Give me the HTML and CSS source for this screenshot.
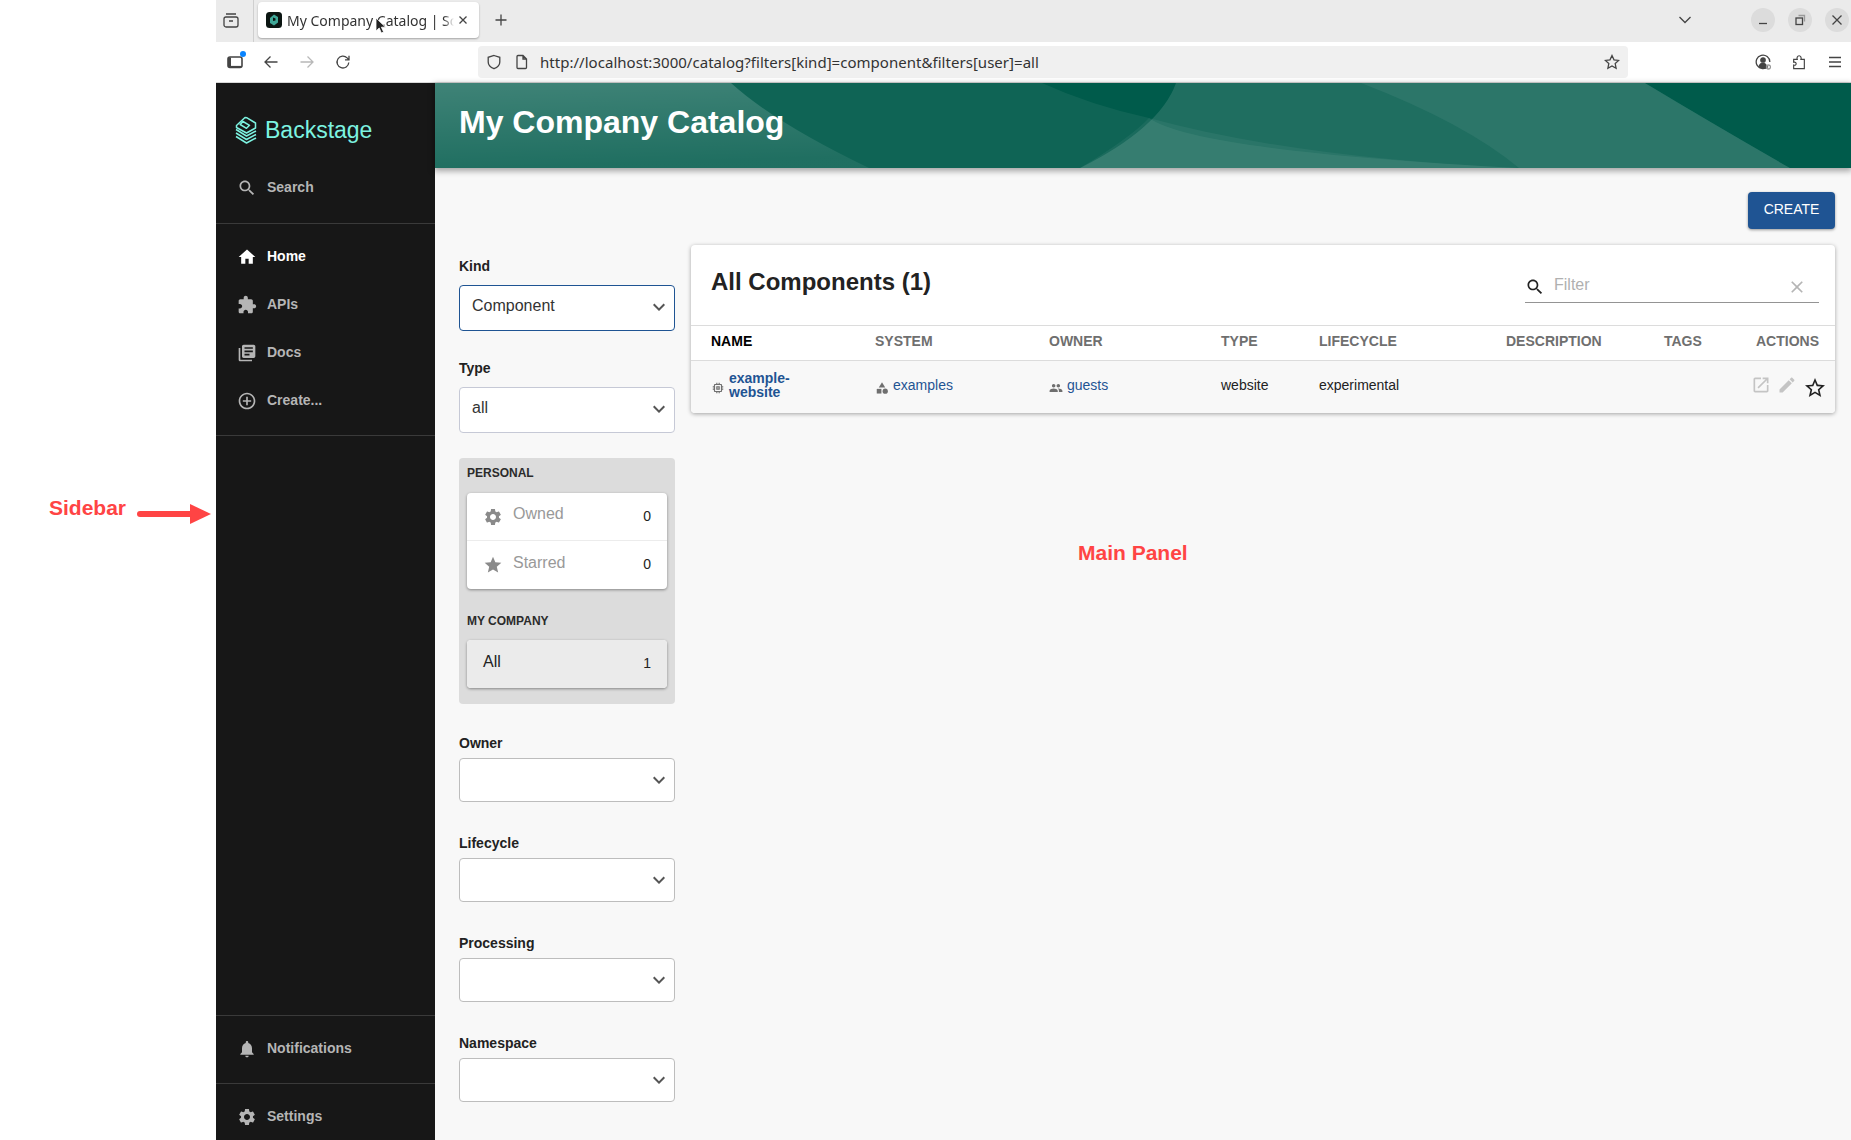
FILE: index.html
```html
<!DOCTYPE html>
<html lang="en">
<head>
    <meta charset="UTF-8">
    <title>My Company Catalog | Scaffolded Backstage App</title>
    <link rel="stylesheet" href="styles.css">
</head>
<body>
    <!-- Icon sprite -->
    <svg class="sprite" xmlns="http://www.w3.org/2000/svg">
        <symbol id="i-search" viewBox="0 0 24 24"><path d="M15.5 14h-.79l-.28-.27C15.41 12.59 16 11.11 16 9.5 16 5.91 13.09 3 9.5 3S3 5.91 3 9.5 5.91 16 9.5 16c1.61 0 3.09-.59 4.23-1.57l.27.28v.79l5 4.99L20.49 19l-4.99-5zm-6 0C7.01 14 5 11.99 5 9.5S7.01 5 9.5 5 14 7.01 14 9.5 11.99 14 9.5 14z"/></symbol>
        <symbol id="i-home" viewBox="0 0 24 24"><path d="M10 20v-6h4v6h5v-8h3L12 3 2 12h3v8z"/></symbol>
        <symbol id="i-extension" viewBox="0 0 24 24"><path d="M20.5 11H19V7c0-1.1-.9-2-2-2h-4V3.5C13 2.12 11.88 1 10.5 1S8 2.12 8 3.5V5H4c-1.1 0-1.99.9-1.99 2v3.8H3.5c1.49 0 2.7 1.21 2.7 2.7s-1.21 2.7-2.7 2.7H2V20c0 1.1.9 2 2 2h3.8v-1.5c0-1.49 1.21-2.7 2.7-2.7 1.49 0 2.7 1.21 2.7 2.7V22H17c1.1 0 2-.9 2-2v-4h1.5c1.38 0 2.5-1.12 2.5-2.5S21.88 11 20.5 11z"/></symbol>
        <symbol id="i-docs" viewBox="0 0 24 24"><path d="M4 6H2v14c0 1.1.9 2 2 2h14v-2H4V6zm16-4H8c-1.1 0-2 .9-2 2v12c0 1.1.9 2 2 2h12c1.1 0 2-.9 2-2V4c0-1.1-.9-2-2-2zm-1 9H9V9h10v2zm-4 4H9v-2h6v2zm4-8H9V5h10v2z"/></symbol>
        <symbol id="i-add" viewBox="0 0 24 24"><path d="M13 7h-2v4H7v2h4v4h2v-4h4v-2h-4V7zm-1-5C6.48 2 2 6.48 2 12s4.48 10 10 10 10-4.48 10-10S17.52 2 12 2zm0 18c-4.41 0-8-3.59-8-8s3.59-8 8-8 8 3.59 8 8-3.59 8-8 8z"/></symbol>
        <symbol id="i-bell" viewBox="0 0 24 24"><path d="M12 22c1.1 0 2-.9 2-2h-4c0 1.1.89 2 2 2zm6-6v-5c0-3.07-1.64-5.64-4.5-6.32V4c0-.83-.67-1.5-1.5-1.5s-1.5.67-1.5 1.5v.68C7.63 5.36 6 7.92 6 11v5l-2 2v1h16v-1l-2-2z"/></symbol>
        <symbol id="i-settings" viewBox="0 0 24 24"><path d="M19.14 12.94c.04-.3.06-.61.06-.94 0-.32-.02-.64-.07-.94l2.03-1.58c.18-.14.23-.41.12-.61l-1.92-3.32c-.12-.22-.37-.29-.59-.22l-2.39.96c-.5-.38-1.03-.7-1.62-.94l-.36-2.54c-.04-.24-.24-.41-.48-.41h-3.84c-.24 0-.43.17-.47.41l-.36 2.54c-.59.24-1.13.57-1.62.94l-2.39-.96c-.22-.08-.47 0-.59.22L2.74 8.87c-.12.21-.08.47.12.61l2.03 1.58c-.05.3-.09.63-.09.94s.02.64.07.94l-2.03 1.58c-.18.14-.23.41-.12.61l1.92 3.32c.12.22.37.29.59.22l2.39-.96c.5.38 1.03.7 1.62.94l.36 2.54c.05.24.24.41.48.41h3.84c.24 0 .44-.17.47-.41l.36-2.54c.59-.24 1.13-.56 1.62-.94l2.39.96c.22.08.47 0 .59-.22l1.92-3.32c.12-.22.07-.47-.12-.61l-2.01-1.58zM12 15.6c-1.98 0-3.6-1.62-3.6-3.6s1.62-3.6 3.6-3.6 3.6 1.62 3.6 3.6-1.62 3.6-3.6 3.6z"/></symbol>
        <symbol id="i-star" viewBox="0 0 24 24"><path d="M12 17.27L18.18 21l-1.64-7.03L22 9.24l-7.19-.61L12 2 9.19 8.63 2 9.24l5.46 4.73L5.82 21z"/></symbol>
        <symbol id="i-star-border" viewBox="0 0 24 24"><path d="M22 9.24l-7.19-.62L12 2 9.19 8.63 2 9.24l5.46 4.73L5.82 21 12 17.27 18.18 21l-1.63-7.03L22 9.24zM12 15.4l-3.76 2.27 1-4.28-3.32-2.88 4.38-.38L12 6.1l1.71 4.04 4.38.38-3.32 2.88 1 4.28L12 15.4z"/></symbol>
        <symbol id="i-open" viewBox="0 0 24 24"><path d="M19 19H5V5h7V3H5c-1.11 0-2 .9-2 2v14c0 1.1.89 2 2 2h14c1.1 0 2-.9 2-2v-7h-2v7zM14 3v2h3.59l-9.83 9.83 1.41 1.41L19 6.41V10h2V3h-7z"/></symbol>
        <symbol id="i-edit" viewBox="0 0 24 24"><path d="M3 17.25V21h3.75L17.81 9.94l-3.75-3.75L3 17.25zM20.71 7.04c.39-.39.39-1.02 0-1.41l-2.34-2.34c-.39-.39-1.02-.39-1.41 0l-1.83 1.83 3.75 3.75 1.83-1.83z"/></symbol>
        <symbol id="i-people" viewBox="0 0 24 24"><path d="M16 11c1.66 0 2.99-1.34 2.99-3S17.66 5 16 5c-1.66 0-3 1.34-3 3s1.34 3 3 3zm-8 0c1.66 0 2.99-1.34 2.99-3S9.66 5 8 5C6.34 5 5 6.34 5 8s1.34 3 3 3zm0 2c-2.33 0-7 1.17-7 3.5V19h14v-2.5c0-2.33-4.67-3.5-7-3.5zm8 0c-.29 0-.62.02-.97.05 1.16.84 1.97 1.97 1.97 3.45V19h6v-2.5c0-2.33-4.67-3.5-7-3.5z"/></symbol>
        <symbol id="i-category" viewBox="0 0 24 24"><path d="M12 2l-5.5 9h11z"/><circle cx="17.5" cy="17.5" r="4.5"/><path d="M3 13.5h8v8H3z"/></symbol>
        <symbol id="i-memory" viewBox="0 0 24 24"><path d="M15 9H9v6h6V9zm-2 4h-2v-2h2v2zm8-2V9h-2V7c0-1.1-.9-2-2-2h-2V3h-2v2h-2V3H9v2H7c-1.1 0-2 .9-2 2v2H3v2h2v2H3v2h2v2c0 1.1.9 2 2 2h2v2h2v-2h2v2h2v-2h2c1.1 0 2-.9 2-2v-2h2v-2h-2v-2h2zm-4 6H7V7h10v10z"/></symbol>
        <symbol id="i-close" viewBox="0 0 24 24"><path d="M19 6.41L17.59 5 12 10.59 6.41 5 5 6.41 10.59 12 5 17.59 6.41 19 12 13.41 17.59 19 19 17.59 13.41 12z"/></symbol>
        <symbol id="i-expand" viewBox="0 0 24 24"><path d="M16.59 8.59L12 13.17 7.41 8.59 6 10l6 6 6-6z"/></symbol>
    </svg>

    <!-- Annotations drawn over the screenshot -->
    <div class="note note-sidebar">Sidebar</div>
    <svg class="note-arrow" viewBox="0 0 74 22" width="74" height="22">
        <path d="M3 11H54" stroke="#ff4444" stroke-width="6" stroke-linecap="round"/>
        <path d="M53 1L74 11L53 21z" fill="#ff4444"/>
    </svg>
    <div class="note note-main">Main Panel</div>

    <div class="gutter"></div>

    <div class="browser">
        <div class="tabbar">
            <svg class="chrome-icon tabs-btn" viewBox="0 0 16 16"><rect x="1" y="5" width="14" height="10" rx="2"/><path d="M3 2h10M6 9h4"/></svg>
            <div class="tab-sep"></div>
            <div class="tab">
                <svg class="favicon" viewBox="0 0 16 16">
                    <rect width="16" height="16" rx="3.5" fill="#0b1512"/>
                    <path d="M8 2.5l4 2.5v5.5l-4 3-4-2.5V6z" fill="#3fa797"/>
                    <path d="M7 5.5l2.5 1v2L7 9z" fill="#0b1512"/>
                </svg>
                <span class="tab-title">My Company Catalog | Sc</span>
                <svg class="chrome-icon tab-close" viewBox="0 0 16 16"><path d="M4.5 4.5l7 7M11.5 4.5l-7 7"/></svg>
            </div>
            <svg class="chrome-icon new-tab" viewBox="0 0 16 16"><path d="M8 2.5v11M2.5 8h11"/></svg>
            <svg class="chrome-icon tab-list" viewBox="0 0 16 16"><path d="M2.5 5L8 10.5 13.5 5"/></svg>
            <div class="win-btn"><svg class="chrome-icon" viewBox="0 0 16 16"><path d="M4 11.5h8"/></svg></div>
            <div class="win-btn"><svg class="chrome-icon" viewBox="0 0 16 16"><rect x="4" y="6" width="6.5" height="6.5"/><path d="M6.5 3.500h6v6" stroke="#999"/></svg></div>
            <div class="win-btn"><svg class="chrome-icon" viewBox="0 0 16 16"><path d="M3.5 3.5l9 9M12.5 3.5l-9 9"/></svg></div>
            <svg class="cursor" viewBox="0 0 12 18" width="12" height="18"><path d="M1 1v13l3.2-3 2.2 5 2.2-1-2.2-4.800h4.200z" fill="#222" stroke="#fff" stroke-width=".8"/></svg>
        </div>

        <div class="toolbar">
            <div class="tool-btn sidebar-toggle">
                <svg class="chrome-icon" viewBox="0 0 16 16"><rect x="1" y="3" width="14" height="10.500" rx="2"/><path d="M2.500 3.500v9.500" stroke-width="3"/><path d="M2 12.800h12" stroke-width="1.800"/></svg>
                <span class="blue-dot"></span>
            </div>
            <div class="tool-btn"><svg class="chrome-icon" viewBox="0 0 16 16"><path d="M14.500 8H2M7.500 2.500L2 8l5.500 5.500"/></svg></div>
            <div class="tool-btn disabled"><svg class="chrome-icon" viewBox="0 0 16 16"><path d="M1.500 8H14M8.500 2.500L14 8l-5.500 5.500"/></svg></div>
            <div class="tool-btn"><svg class="chrome-icon" viewBox="0 0 16 16"><path d="M13.800 8.500a5.900 5.900 0 1 1-1.700-4.600L14 5.800M14 1.800v4h-4"/></svg></div>

            <div class="urlbar">
                <svg class="chrome-icon" viewBox="0 0 16 16"><path d="M8 1.500l5.800 1.800V8c0 3.300-2.700 5.500-5.800 6.700C4.900 13.500 2.200 11.300 2.200 8V3.300z"/></svg>
                <svg class="chrome-icon" viewBox="0 0 16 16"><path d="M4 1.500h5l3.500 3.500v8.500a1 1 0 0 1-1 1h-7.500a1 1 0 0 1-1-1v-11a1 1 0 0 1 1-1zM9 1.500V5h3.500"/></svg>
                <span class="url-text">http://localhost:3000/catalog?filters[kind]=component&amp;filters[user]=all</span>
                <svg class="chrome-icon" viewBox="0 0 16 16"><path d="M8 1.500l2 4.300 4.700.6-3.500 3.200.9 4.700L8 12l-4.100 2.300.9-4.700-3.500-3.200 4.700-.6z"/></svg>
            </div>

            <div class="tool-btn"><svg class="chrome-icon" viewBox="0 0 16 16"><path d="M13 12.500A6.800 6.800 0 1 1 14.800 8"/><circle cx="8" cy="6" r="2.200" fill="#444"/><path d="M4.500 11.500c.5-1.500 2-2 3.500-2s2.500.5 3 1.500v2.500H5z" fill="#444"/><circle cx="13.500" cy="13" r="2" stroke="#999"/></svg></div>
            <div class="tool-btn"><svg class="chrome-icon" viewBox="0 0 18 18"><path d="M3 16.500V12.500c1.700.5 2.800-.4 2.800-1.600S4.700 8.800 3 9.300V6h4c-.7-1.700.2-4 2.100-4s2.800 2.300 2.100 4H15v10.500z"/></svg></div>
            <div class="tool-btn"><svg class="chrome-icon" viewBox="0 0 16 16"><path d="M2 3.500h12M2 8h12M2 12.500h12"/></svg></div>
        </div>

        <div class="app">
            <nav class="sidebar">
                <div class="brand">
                    <svg class="brand-mark" viewBox="0 0 22 28" width="22" height="28">
                        <path d="M1.500 9.500L10 1.500l2 .3 8.500 5.200v5L11.500 17 1.500 11.500zM8 5.500l6.500 3.800-3 3-6.300-3.800z"/>
                        <path d="M1 13.500L11.500 20 21 15M1 17l10.500 6.500L21 18.500M1 20.500L11.500 27 21 22"/>
                    </svg>
                    <span class="brand-name">Backstage</span>
                </div>
                <a class="nav-item"><svg class="icon icon-20"><use href="#i-search"/></svg>Search</a>
                <div class="nav-divider search-divider"></div>
                <div class="nav-group">
                    <a class="nav-item active"><svg class="icon icon-20"><use href="#i-home"/></svg>Home</a>
                    <a class="nav-item"><svg class="icon icon-20"><use href="#i-extension"/></svg>APIs</a>
                    <a class="nav-item"><svg class="icon icon-20"><use href="#i-docs"/></svg>Docs</a>
                    <a class="nav-item"><svg class="icon icon-20"><use href="#i-add"/></svg>Create...</a>
                </div>
                <div class="nav-divider"></div>
                <div class="nav-spacer"></div>
                <div class="nav-divider"></div>
                <a class="nav-item notif-item"><svg class="icon icon-20"><use href="#i-bell"/></svg>Notifications</a>
                <div class="nav-divider"></div>
                <a class="nav-item settings-item"><svg class="icon icon-20"><use href="#i-settings"/></svg>Settings</a>
            </nav>

            <div class="page">
                <header class="page-header">
                    <svg class="waves" viewBox="0 0 1416 85" width="1416" height="85" preserveAspectRatio="none">
                        <defs>
                            <linearGradient id="fade-left" x1="0" y1="0" x2="0.15" y2="1">
                                <stop offset="0" stop-color="#fff" stop-opacity=".2"/>
                                <stop offset="1" stop-color="#fff" stop-opacity=".07"/>
                            </linearGradient>
                        </defs>
                        <path d="M0 0H607Q655 22 714 35Q760 68 1084 85H0z" fill="#fff" fill-opacity=".06"/>
                        <path d="M741 0Q725 45 645 85H1355Q1285 45 1210 0z" fill="#fff" fill-opacity=".12"/>
                        <path d="M926 0Q1030 40 1084 85H1355Q1285 45 1210 0z" fill="#fff" fill-opacity=".06"/>
                        <path d="M714 35Q860 75 1084 85H645Q695 55 714 35z" fill="#fff" fill-opacity=".05"/>
                        <path d="M0 0H296Q340 40 434 85H0z" fill="url(#fade-left)"/>
                    </svg>
                    <h1 class="page-title">My Company Catalog</h1>
                </header>

                <main class="content">
                    <div class="content-actions">
                        <button class="create-btn">CREATE</button>
                    </div>
                    <div class="content-body">
                        <aside class="filters">
                            <div class="field field-tall">
                                <label class="field-label">Kind</label>
                                <div class="select select-focus"><span>Component</span><svg class="icon icon-24"><use href="#i-expand"/></svg></div>
                            </div>
                            <div class="field field-tall">
                                <label class="field-label">Type</label>
                                <div class="select select-type"><span>all</span><svg class="icon icon-24"><use href="#i-expand"/></svg></div>
                            </div>

                            <div class="picker">
                                <div class="picker-title">PERSONAL</div>
                                <div class="picker-card">
                                    <div class="picker-row picker-row-first">
                                        <svg class="icon icon-20"><use href="#i-settings"/></svg>
                                        <span class="picker-name">Owned</span>
                                        <span class="picker-count">0</span>
                                    </div>
                                    <div class="picker-row picker-row-second">
                                        <svg class="icon icon-20"><use href="#i-star"/></svg>
                                        <span class="picker-name">Starred</span>
                                        <span class="picker-count">0</span>
                                    </div>
                                </div>
                                <div class="picker-title company-title">MY COMPANY</div>
                                <div class="picker-card">
                                    <div class="picker-row selected">
                                        <span class="picker-name">All</span>
                                        <span class="picker-count">1</span>
                                    </div>
                                </div>
                            </div>

                            <div class="field">
                                <label class="field-label">Owner</label>
                                <div class="select"><span></span><svg class="icon icon-24"><use href="#i-expand"/></svg></div>
                            </div>
                            <div class="field">
                                <label class="field-label">Lifecycle</label>
                                <div class="select"><span></span><svg class="icon icon-24"><use href="#i-expand"/></svg></div>
                            </div>
                            <div class="field">
                                <label class="field-label">Processing</label>
                                <div class="select"><span></span><svg class="icon icon-24"><use href="#i-expand"/></svg></div>
                            </div>
                            <div class="field">
                                <label class="field-label">Namespace</label>
                                <div class="select"><span></span><svg class="icon icon-24"><use href="#i-expand"/></svg></div>
                            </div>
                        </aside>

                        <section class="table-card">
                            <div class="table-toolbar">
                                <h2 class="table-title">All Components (1)</h2>
                                <div class="table-filter">
                                    <svg class="icon icon-20"><use href="#i-search"/></svg>
                                    <span class="filter-placeholder">Filter</span>
                                    <svg class="icon icon-20"><use href="#i-close"/></svg>
                                </div>
                            </div>
                            <div class="table-row table-head">
                                <div class="sorted">NAME</div>
                                <div>SYSTEM</div>
                                <div>OWNER</div>
                                <div>TYPE</div>
                                <div>LIFECYCLE</div>
                                <div>DESCRIPTION</div>
                                <div>TAGS</div>
                                <div>ACTIONS</div>
                            </div>
                            <div class="table-row table-body">
                                <div class="entity">
                                    <svg class="icon icon-14"><use href="#i-memory"/></svg>
                                    <a class="entity-name">example-<br>website</a>
                                </div>
                                <div class="entity">
                                    <svg class="icon icon-14"><use href="#i-category"/></svg>
                                    <a class="entity-link">examples</a>
                                </div>
                                <div class="entity">
                                    <svg class="icon icon-14"><use href="#i-people"/></svg>
                                    <a class="entity-link">guests</a>
                                </div>
                                <div>website</div>
                                <div>experimental</div>
                                <div></div>
                                <div></div>
                                <div class="row-actions">
                                    <svg class="icon icon-20"><use href="#i-open"/></svg>
                                    <svg class="icon icon-20"><use href="#i-edit"/></svg>
                                    <svg class="icon icon-24 star-action"><use href="#i-star-border"/></svg>
                                </div>
                            </div>
                        </section>
                    </div>
                </main>
            </div>
        </div>
    </div>
</body>
</html>
```

FILE: styles.css
```css
:root {
    --sidebar-bg: #171717;
    --sidebar-text: #b5b5b5;
    --link-color: #1f5493;
    --page-bg: #f8f8f8;
    --note-color: #ff4444;
}

* {
    margin: 0;
    padding: 0;
    box-sizing: border-box;
}

html, body {
    height: 1140px;
    overflow: hidden;
}

body {
    position: relative;
    display: flex;
    background: #fff;
    font-family: "Liberation Sans", Arial, sans-serif;
    color: #222;
}

.sprite {
    display: none;
}

.icon {
    flex: none;
    fill: currentColor;
}

.icon-14 { width: 14px; height: 14px; }
.icon-20 { width: 20px; height: 20px; }
.icon-24 { width: 24px; height: 24px; }

.gutter {
    flex: 0 0 216px;
}

/* Annotations */
.note {
    position: absolute;
    z-index: 5;
    font-size: 21px;
    font-weight: bold;
    line-height: 24px;
    color: var(--note-color);
}

.note-sidebar {
    left: 49px;
    top: 496px;
}

.note-main {
    left: 1078px;
    top: 541px;
}

.note-arrow {
    position: absolute;
    z-index: 5;
    left: 137px;
    top: 503px;
}

/* Browser chrome */
.browser {
    flex: 1;
    min-width: 0;
    display: flex;
    flex-direction: column;
    font-family: "Noto Sans", sans-serif;
}

.chrome-icon {
    flex: none;
    width: 16px;
    height: 16px;
    fill: none;
    stroke: #444;
    stroke-width: 1.3;
}

.tabbar {
    position: relative;
    height: 42px;
    display: flex;
    align-items: center;
    padding: 0 2px 2px 7px;
    background: #ebebeb;
}

.tab-sep {
    width: 1px;
    height: 42px;
    margin: 2px 4px 0 14px;
    background: #cfcfcf;
}

.tab {
    width: 221px;
    height: 36px;
    display: flex;
    align-items: center;
    padding: 0 8px;
    background: #fff;
    border-radius: 4px;
    box-shadow: 0 1px 2px rgba(0, 0, 0, 0.3);
}

.favicon {
    flex: none;
    width: 16px;
    height: 16px;
}

.tab-title {
    flex: 1;
    min-width: 0;
    margin-left: 5px;
    white-space: nowrap;
    font-size: 14px;
    color: #333;
    -webkit-mask-image: linear-gradient(to right, #000 94%, transparent 100%);
    mask-image: linear-gradient(to right, #000 94%, transparent 100%);
}

.tab-close {
    margin-left: 1px;
}

.new-tab {
    margin-left: 14px;
}

.tab-list {
    margin-left: auto;
    margin-right: 58px;
}

.win-btn {
    width: 24px;
    height: 24px;
    display: flex;
    align-items: center;
    justify-content: center;
    border-radius: 50%;
    background: #dcdcdc;
}

.win-btn + .win-btn {
    margin-left: 13px;
}

.cursor {
    position: absolute;
    left: 159px;
    top: 17px;
}

.toolbar {
    height: 41px;
    display: flex;
    align-items: center;
    gap: 4px;
    padding: 0 0 0 3px;
    background: #fff;
    border-bottom: 1px solid #d8d8d8;
}

.tool-btn {
    position: relative;
    flex: none;
    width: 32px;
    height: 32px;
    display: flex;
    align-items: center;
    justify-content: center;
}

.tool-btn.disabled .chrome-icon {
    stroke: #b8b8b8;
}

.sidebar-toggle .chrome-icon {
    stroke-width: 1.6;
}

.blue-dot {
    position: absolute;
    right: 5px;
    top: 5px;
    width: 6px;
    height: 6px;
    border-radius: 50%;
    background: #0a84ff;
}

.urlbar {
    flex: 1;
    height: 32px;
    margin: 0 115px;
    display: flex;
    align-items: center;
    padding: 0 8px;
    background: #f0f0f0;
    border-radius: 4px;
}

.urlbar .chrome-icon + .chrome-icon {
    margin-left: 12px;
}

.url-text {
    flex: 1;
    margin-left: 10px;
    font-size: 15px;
    letter-spacing: 0.03px;
    color: #333;
    white-space: nowrap;
}

/* Backstage app */
.app {
    flex: 1;
    min-height: 0;
    display: flex;
}

.sidebar {
    flex: 0 0 219px;
    display: flex;
    flex-direction: column;
    background: var(--sidebar-bg);
}

.brand {
    height: 80px;
    display: flex;
    align-items: center;
    padding: 14px 0 0 19px;
    color: #7df3e1;
}

.brand-mark {
    fill: none;
    stroke: currentColor;
    stroke-width: 1.5;
    stroke-linejoin: round;
}

.brand-name {
    margin-left: 8px;
    font-family: "Liberation Sans", Arial, sans-serif;
    font-size: 23px;
}

.nav-item {
    height: 48px;
    flex: none;
    display: flex;
    align-items: center;
    padding-left: 21px;
    font-family: "Liberation Sans", Arial, sans-serif;
    font-size: 14px;
    font-weight: bold;
    color: var(--sidebar-text);
}

.nav-item .icon {
    margin: 2px 10px 0 0;
}

.nav-item.active {
    color: #fff;
}

.nav-divider {
    flex: none;
    height: 1px;
    background: #3a3a3a;
}

.search-divider {
    margin-top: 12px;
}

.nav-group {
    padding: 8px 0 11px;
}

.nav-spacer {
    flex: 1;
}

.notif-item {
    margin: 8px 0 11px;
}

.settings-item {
    margin-top: 8px;
}

.page {
    flex: 1;
    min-width: 0;
    display: flex;
    flex-direction: column;
    background: var(--page-bg);
    font-family: "Liberation Sans", Arial, sans-serif;
}

.page-header {
    position: relative;
    z-index: 1;
    height: 85px;
    flex: none;
    display: flex;
    align-items: center;
    padding: 0 0 6px 24px;
    background: #005b4b;
    box-shadow: 0 2px 6px 1px rgba(0, 0, 0, 0.35);
}

.waves {
    position: absolute;
    left: 0;
    top: 0;
}

.page-title {
    position: relative;
    font-size: 32px;
    font-weight: bold;
    color: #fff;
}

.content {
    flex: 1;
    min-height: 0;
    padding: 24px 16px 0 24px;
}

.content-actions {
    display: flex;
    justify-content: flex-end;
    margin-bottom: 16px;
}

.create-btn {
    width: 87px;
    height: 37px;
    padding-bottom: 4px;
    border: none;
    border-radius: 4px;
    font-family: inherit;
    font-size: 14px;
    color: #fff;
    background: var(--link-color);
    box-shadow: 0 1px 3px rgba(0, 0, 0, 0.4);
}

.content-body {
    display: flex;
    align-items: flex-start;
    gap: 16px;
}

/* Filters */
.filters {
    flex: 0 0 216px;
    padding-top: 11px;
}

.field {
    margin-bottom: 31px;
}

.field-label {
    display: block;
    height: 20px;
    margin-bottom: 5px;
    font-size: 14px;
    font-weight: bold;
    line-height: 20px;
    color: #222;
}

.field-tall {
    margin-bottom: 27px;
}

.field-tall .field-label {
    margin-bottom: 9px;
}

.field-tall .select {
    height: 46px;
}

.select {
    height: 44px;
    display: flex;
    justify-content: space-between;
    align-items: flex-start;
    padding: 8px 3px 0 12px;
    background: #fff;
    border: 1px solid #bdbdbd;
    border-radius: 4px;
    font-size: 16px;
    line-height: 24px;
    color: #333;
}

.select .icon {
    color: #555;
    margin-top: 1px;
}

.select-focus {
    border-color: var(--link-color);
}

.select-type {
    border-color: #c6c9d6;
}

.picker {
    margin: -2px 0 29px;
    padding: 8px 8px 0;
    height: 246px;
    background: #dcdcdc;
    border-radius: 4px;
}

.picker-title {
    height: 15px;
    margin-bottom: 12px;
    font-size: 12px;
    font-weight: bold;
    line-height: 15px;
    color: #2b2b2b;
}

.company-title {
    margin: 25px 0 11px;
}

.picker-card {
    background: #fff;
    border-radius: 4px;
    box-shadow: 0 1px 3px rgba(0, 0, 0, 0.4);
}

.picker-row {
    height: 48px;
    display: flex;
    align-items: center;
    padding: 0 16px;
    font-size: 16px;
    color: #999;
}

.picker-row-first {
    height: 47px;
}

.picker-row-second {
    height: 49px;
    border-top: 1px solid #ececec;
}

.picker-row .icon {
    color: #8a8a8a;
    margin-right: 10px;
}

.picker-name {
    flex: 1;
    margin-bottom: 5px;
}

.picker-count {
    margin-bottom: 2px;
    font-size: 14px;
    color: #222;
}

.picker-row.selected {
    background: #ebebeb;
    border-radius: 4px;
    color: #222;
}

/* Table */
.table-card {
    flex: 1;
    min-width: 0;
    background: #fff;
    border-radius: 4px;
    box-shadow: 0 1px 4px rgba(0, 0, 0, 0.35);
}

.table-toolbar {
    height: 80px;
    display: flex;
    justify-content: space-between;
    padding: 21px 16px 0 20px;
}

.table-title {
    font-size: 24px;
    font-weight: bold;
    line-height: 32px;
    color: #222;
}

.table-filter {
    width: 294px;
    height: 37px;
    display: flex;
    align-items: center;
    padding: 0 12px 0 0;
    border-bottom: 1px solid #949494;
}

.table-filter .icon:first-child {
    color: #222;
    margin: 5px 9px 0 0;
}

.table-filter .icon:last-child {
    color: #b5b5b5;
    margin-top: 5px;
}

.filter-placeholder {
    flex: 1;
    margin-top: 2px;
    font-size: 16px;
    color: #b0b0b0;
}

.table-row {
    display: grid;
    grid-template-columns: 164px 174px 172px 98px 187px 158px 1fr auto;
    align-items: center;
    padding: 0 16px 0 20px;
    font-size: 14px;
}

.table-head {
    height: 36px;
    padding-bottom: 4px;
    border-top: 1px solid #dcdcdc;
    border-bottom: 1px solid #dcdcdc;
    font-weight: bold;
    color: #6f6f6f;
}

.table-head .sorted {
    color: #000;
}

.table-body {
    height: 52px;
    padding-bottom: 5px;
    background: var(--page-bg);
    border-radius: 0 0 4px 4px;
    color: #222;
}

.entity {
    display: flex;
    align-items: center;
    gap: 4px;
}

.entity .icon {
    color: #6f6f6f;
    margin-top: 7px;
}

.entity-name {
    font-weight: bold;
    line-height: 14px;
    color: var(--link-color);
}

.entity-link {
    color: var(--link-color);
}

.row-actions {
    display: flex;
    align-items: center;
    gap: 6px;
    margin-right: -8px;
    color: #c4c4c4;
}

.row-actions .star-action {
    color: #222;
    margin-top: 6px;
}
```
